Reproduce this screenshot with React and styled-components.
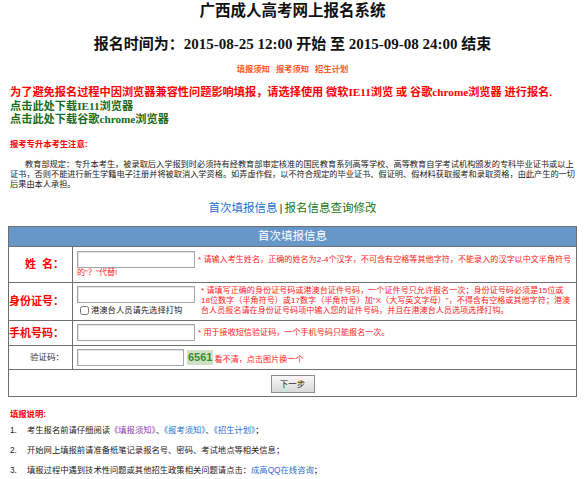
import React from "react";
import styled, { createGlobalStyle } from "styled-components";

const GlobalStyle = createGlobalStyle`
  body {
    margin: 0 8px;
    background: #fff;
    color: #222;
    font-family: "Liberation Sans", "Noto Sans CJK SC", sans-serif;
  }
  a { text-decoration: none; }
`;

const serif = `"Liberation Serif", "Noto Sans CJK SC", serif`;
const sans = `"Liberation Sans", "Noto Sans CJK SC", sans-serif`;

const Page = styled.div`
  display: flex;
  flex-direction: column;
`;

const Title = styled.h1`
  margin: 1px 0 0;
  text-align: center;
  font: bold 15.5px/20px ${serif};
  color: #111;
`;

const Period = styled.h2`
  margin: 13px 0 0;
  text-align: center;
  font: bold 15px/20px ${serif};
  color: #111;
`;

const TopLinks = styled.div`
  margin-top: 9px;
  display: flex;
  justify-content: center;
  gap: 6px;
  font: bold 8.3px/12px ${sans};
  a { color: #ff5a26; }
`;

const Notice = styled.div`
  margin-top: 11px;
  padding-left: 2px;
  font: bold 11.2px/13.5px ${serif};
`;

const Warn = styled.div`
  color: #ff0000;
  white-space: nowrap;
`;

const Download = styled.a`
  display: block;
  color: #1b6b1b;
`;

const RuleHead = styled.div`
  margin-top: 11px;
  padding-left: 2px;
  color: #ff0000;
  font: bold 8.3px/12px ${sans};
`;

const Rule = styled.p`
  margin: 10px 0 0;
  padding-left: 2px;
  text-indent: 15px;
  font: 8.2px/10px ${sans};
  color: #222;
`;

const Tabs = styled.div`
  margin-top: 10px;
  display: flex;
  justify-content: center;
  align-items: baseline;
  gap: 2px;
  font: 11.5px/16px ${sans};
  color: #333;
`;

const Tab = styled.a`
  color: ${(p) => p.$color};
`;

const Form = styled.table`
  margin-top: 10px;
  width: 100%;
  border-collapse: collapse;
  border: 1px solid #666;
  td, th { border: 1px solid #6f6f6f; }
`;

const Head = styled.th`
  height: 19px;
  padding: 0;
  background: #6797c9;
  color: #fff;
  font: 11.5px/19px ${sans};
  text-align: center;
`;

const Label = styled.td`
  width: 54px;
  padding: 0 8px 0 0;
  text-align: right;
  white-space: nowrap;
  color: ${(p) => (p.$plain ? "#333" : "#ff0000")};
  font: ${(p) => (p.$plain ? "normal 8.5px" : "bold 11px")}/14px ${sans};
`;

const Field = styled.td`
  height: ${(p) => p.$h}px;
  padding: 0 4px;
  box-sizing: border-box;
  font: 8.1px/10px ${sans};
  color: #ff1a1a;
  vertical-align: middle;
`;

const Input = styled.input`
  width: ${(p) => p.$w || 118}px;
  height: 17px;
  box-sizing: border-box;
  margin: 0 3px 0 0;
  padding: 0 2px;
  border: 1px solid #a6a6a6;
  box-shadow: inset 1px 1px 0 #e2e2e2;
  vertical-align: middle;
  background: #fff;
`;

const InlineField = styled.div`
  line-height: 10px;
`;

const Split = styled.div`
  display: flex;
  align-items: flex-start;
  gap: 3px;
`;

const Stack = styled.div`
  display: flex;
  flex-direction: column;
  gap: 2px;
  flex: none;
`;

const Check = styled.label`
  display: flex;
  align-items: center;
  gap: 2px;
  padding-left: 3px;
  color: #222;
  font: 8.3px/11px ${sans};
  input {
    width: 9px;
    height: 9px;
    margin: 0;
  }
`;

const Captcha = styled.span`
  display: inline-block;
  padding: 0 1px;
  margin-right: 1px;
  background: #cfe2c8;
  color: #3b8a2e;
  font: bold 11px/15px "Liberation Sans", Arial, sans-serif;
  vertical-align: middle;
`;

const Again = styled.span`
  vertical-align: -2px;
  color: #ff1a1a;
`;

const Submit = styled.td`
  height: 26px;
  padding: 0;
  text-align: center;
  vertical-align: middle;
`;

const Button = styled.button`
  width: 44px;
  height: 18px;
  padding: 0;
  border: 1px solid #8d8d8d;
  background: linear-gradient(#f8f8f8, #d9d9d9);
  font: 8.5px/16px ${sans};
  color: #222;
`;

const HelpHead = styled.div`
  margin-top: 11px;
  padding-left: 2px;
  color: #ff0000;
  font: bold 8.3px/12px ${sans};
`;

const Steps = styled.ol`
  margin: 5px 0 0;
  padding: 0 0 0 2px;
  list-style: none;
  display: flex;
  flex-direction: column;
  gap: 9px;
  font: 8.3px/11px ${sans};
  color: #222;
`;

const Step = styled.li`
  display: grid;
  grid-template-columns: 17px 1fr;
`;

const Ref = styled.a`
  color: ${(p) => p.$color || "#2a6ed0"};
`;

export default function App() {
  return (
    <Page>
      <GlobalStyle />
      <Title>广西成人高考网上报名系统</Title>
      <Period>报名时间为：2015-08-25 12:00 开始 至 2015-09-08 24:00 结束</Period>
      <TopLinks>
        <a href="#">填报须知</a>
        <a href="#">报考须知</a>
        <a href="#">招生计划</a>
      </TopLinks>

      <Notice>
        <Warn>为了避免报名过程中因浏览器兼容性问题影响填报，请选择使用 微软IE11浏览 或 谷歌chrome浏览器 进行报名.</Warn>
        <Download href="#">点击此处下载IE11浏览器</Download>
        <Download href="#">点击此处下载谷歌chrome浏览器</Download>
      </Notice>

      <RuleHead>报考专升本考生注意:</RuleHead>
      <Rule>
        教育部规定：专升本考生，被录取后入学报到时必须持有经教育部审定核准的国民教育系列高等学校、高等教育自学考试机构颁发的专科毕业证书或以上证书，否则不能进行新生学籍电子注册并将被取消入学资格。如弄虚作假，以不符合规定的毕业证书、假证明、假材料获取报考和录取资格，由此产生的一切后果由本人承担。
      </Rule>

      <Tabs>
        <Tab href="#" $color="#1b6fcf">首次填报信息</Tab>
        <span>|</span>
        <Tab href="#" $color="#23760f">报名信息查询修改</Tab>
      </Tabs>

      <Form>
        <thead>
          <tr>
            <Head colSpan={2}>首次填报信息</Head>
          </tr>
        </thead>
        <tbody>
          <tr>
            <Label>姓&nbsp;&nbsp;名：</Label>
            <Field $h={36}>
              <InlineField>
                <Input type="text" />
                * 请输入考生姓名，正确的姓名为2-4个汉字，不可含有空格等其他字符，不能录入的汉字以中文半角符号的"？"代替!
              </InlineField>
            </Field>
          </tr>
          <tr>
            <Label>身份证号：</Label>
            <Field $h={38}>
              <Split>
                <Stack>
                  <Input type="text" />
                  <Check>
                    <input type="checkbox" />
                    港澳台人员请先选择打钩
                  </Check>
                </Stack>
                <div>
                  * 请填写正确的身份证号码或港澳台证件号码，一个证件号只允许报名一次；身份证号码必须是15位或18位数字（半角符号）或17数字（半角符号）加"X（大写英文字母）"，不得含有空格或其他字符；港澳台人员报名请在身份证号码项中输入您的证件号码，并且在港澳台人员选项选择打钩。
                </div>
              </Split>
            </Field>
          </tr>
          <tr>
            <Label>手机号码：</Label>
            <Field $h={25}>
              <Input type="text" />
              * 用于接收短信验证码，一个手机号码只能报名一次。
            </Field>
          </tr>
          <tr>
            <Label $plain>验证码：</Label>
            <Field $h={24}>
              <Input type="text" $w={107} />
              <Captcha>6561</Captcha>
              <Again>看不清，点击图片换一个</Again>
            </Field>
          </tr>
          <tr>
            <Submit colSpan={2}>
              <Button type="button">下一步</Button>
            </Submit>
          </tr>
        </tbody>
      </Form>

      <HelpHead>填报说明:</HelpHead>
      <Steps>
        <Step>
          <span>1.</span>
          <span>
            考生报名前请仔细阅读<Ref href="#" $color="#8e3aa6">《填报须知》</Ref>、<Ref href="#">《报考须知》</Ref>、<Ref href="#">《招生计划》</Ref>；
          </span>
        </Step>
        <Step>
          <span>2.</span>
          <span>开始网上填报前请准备纸笔记录报名号、密码、考试地点等相关信息；</span>
        </Step>
        <Step>
          <span>3.</span>
          <span>
            填报过程中遇到技术性问题或其他招生政策相关问题请点击：<Ref href="#">成高QQ在线咨询</Ref>；
          </span>
        </Step>
      </Steps>
    </Page>
  );
}
